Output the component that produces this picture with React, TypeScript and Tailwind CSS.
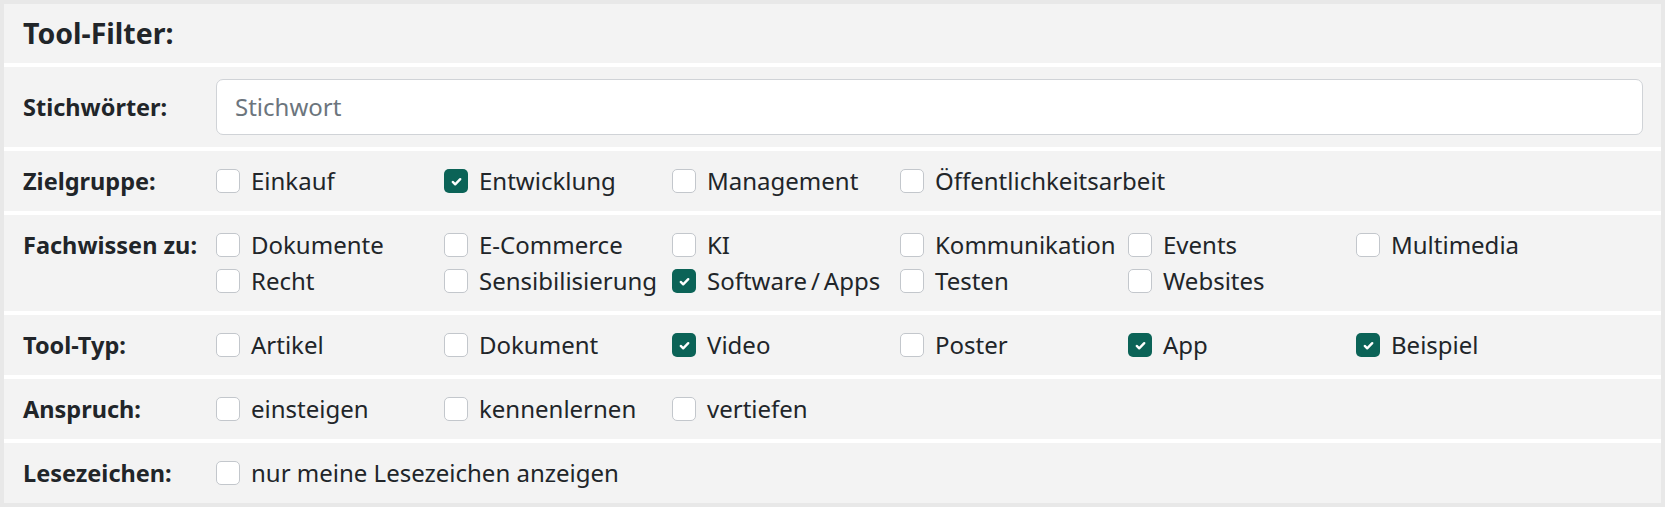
const groups = [
  {
    label: 'Zielgruppe:',
    options: [
      { name: 'Einkauf', checked: false },
      { name: 'Entwicklung', checked: true },
      { name: 'Management', checked: false },
      { name: 'Öffentlichkeitsarbeit', checked: false },
    ],
  },
  {
    label: 'Fachwissen zu:',
    options: [
      { name: 'Dokumente', checked: false },
      { name: 'E-Commerce', checked: false },
      { name: 'KI', checked: false },
      { name: 'Kommunikation', checked: false },
      { name: 'Events', checked: false },
      { name: 'Multimedia', checked: false },
      { name: 'Recht', checked: false },
      { name: 'Sensibilisierung', checked: false },
      { name: 'Software\u2009/\u2009Apps', checked: true },
      { name: 'Testen', checked: false },
      { name: 'Websites', checked: false },
    ],
  },
  {
    label: 'Tool-Typ:',
    options: [
      { name: 'Artikel', checked: false },
      { name: 'Dokument', checked: false },
      { name: 'Video', checked: true },
      { name: 'Poster', checked: false },
      { name: 'App', checked: true },
      { name: 'Beispiel', checked: true },
    ],
  },
  {
    label: 'Anspruch:',
    options: [
      { name: 'einsteigen', checked: false },
      { name: 'kennenlernen', checked: false },
      { name: 'vertiefen', checked: false },
    ],
  },
];

const Checkbox = ({ checked }: { checked: boolean }) =>
  checked ? (
    <span className="flex h-[24px] w-[24px] shrink-0 items-center justify-center rounded-[5px] bg-[#0b6357]">
      <svg viewBox="0 0 16 16" className="h-[15px] w-[15px]" fill="none">
        <path d="M4 8.5l2.6 2.5L12 5.5" stroke="#fff" strokeWidth="2.5" strokeLinecap="round" strokeLinejoin="round" />
      </svg>
    </span>
  ) : (
    <span className="h-[24px] w-[24px] shrink-0 rounded-[5px] border border-[#c3c7cc] bg-white" />
  );

const Row = ({
  label,
  center = false,
  children,
}: {
  label: string;
  center?: boolean;
  children: React.ReactNode;
}) => (
  <div className={`flex border-t-4 border-white py-[12px] pl-[19px] pr-[18px] ${center ? 'items-center' : ''}`}>
    <div className="w-[193px] shrink-0 text-[23.5px] font-bold leading-[36px]">{label}</div>
    {children}
  </div>
);

export default function App() {
  return (
    <div className="min-h-screen bg-white font-['Noto_Sans',sans-serif] text-[24px] text-[#212529]">
      <div className="border-4 border-[#e8e8e8] bg-[#f3f3f3]">
        <div className="flex h-[59px] items-center px-[19px] text-[28.5px] font-bold">Tool-Filter:</div>

        <Row label="Stichwörter:" center>
          <div className="flex h-[56px] flex-1 items-center rounded-[7px] border border-[#d0d3d7] bg-white px-[18px] text-[#6c757d]">
            Stichwort
          </div>
        </Row>

        {groups.map((group) => (
          <Row key={group.label} label={group.label}>
            <div className="grid grid-cols-[repeat(6,228px)]">
              {group.options.map((option) => (
                <label key={option.name} className="flex h-[36px] items-center gap-[11px] whitespace-nowrap">
                  <Checkbox checked={option.checked} />
                  <span>{option.name}</span>
                </label>
              ))}
            </div>
          </Row>
        ))}

        <Row label="Lesezeichen:">
          <label className="flex h-[36px] items-center gap-[11px]">
            <Checkbox checked={false} />
            <span>nur meine Lesezeichen anzeigen</span>
          </label>
        </Row>
      </div>
    </div>
  );
}
